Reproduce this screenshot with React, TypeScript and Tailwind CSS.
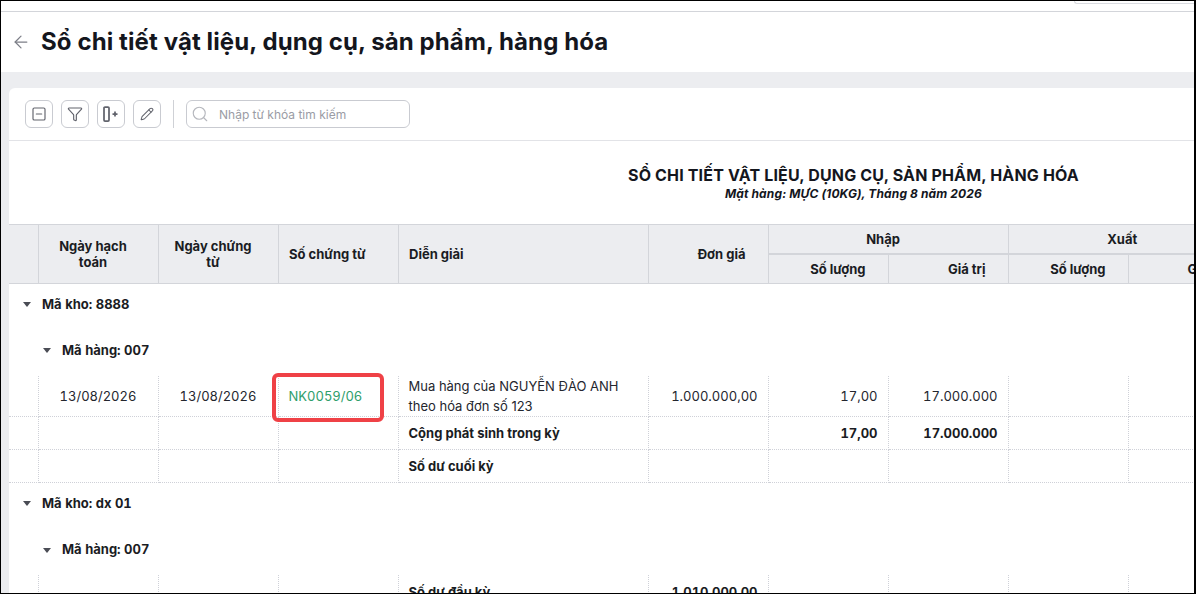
import { ArrowLeft, Filter, Pencil, Search, SquareMinus } from 'lucide-react';

const FONT = "font-['Inter','Noto_Sans',sans-serif]";

const dotted = 'border-r border-b border-dotted border-[#cfd1d8]';
const headCell = 'border-r border-b border-[#d3d5da] bg-[#ecedf0] text-[13px] font-bold text-[#1a1c23]';

const colWidths = [29, 120, 120, 120, 250, 120, 120, 120, 120, 120, 60];

const ToolButton = ({ children }: { children: React.ReactNode }) => (
  <button className="flex h-7 w-7 items-center justify-center rounded-md border border-[#c9cbd1] bg-white text-[#62646d]">
    {children}
  </button>
);

const Caret = () => (
  <span className="inline-block h-0 w-0 border-x-[4px] border-t-[5px] border-x-transparent border-t-[#4a4c55]" />
);

const GroupRow = ({ label, indent, height }: { label: string; indent: boolean; height: string }) => (
  <tr className={height}>
    <td colSpan={11} className="p-0">
      <div className={`flex items-center gap-[11px] text-[13px] font-bold tabular-nums text-[#1a1c23] ${indent ? 'pl-[34px]' : 'pl-[14px]'}`}>
        <Caret />
        <span>{label}</span>
      </div>
    </td>
  </tr>
);

type RowProps = {
  height: string;
  date?: boolean;
  voucher?: React.ReactNode;
  desc?: React.ReactNode;
  price?: string;
  qty?: string;
  value?: string;
  bold?: boolean;
  noBorder?: boolean;
};

const DataRow = ({ height, date, voucher, desc, price, qty, value, bold, noBorder }: RowProps) => {
  const cell = noBorder ? 'border-r border-dotted border-[#cfd1d8]' : dotted;
  const num = `${cell} pr-[10px] pt-[2px] text-right text-[13px] tabular-nums ${bold ? 'font-bold text-[#1a1c23]' : 'text-[#24262e]'}`;
  return (
    <tr className={height}>
      <td className={cell} />
      <td className={`${cell} pt-[2px] text-center text-[13px] tabular-nums text-[#24262e]`}>{date && '13/08/2026'}</td>
      <td className={`${cell} pt-[2px] text-center text-[13px] tabular-nums text-[#24262e]`}>{date && '13/08/2026'}</td>
      <td className={`${cell} relative pl-[10px] pt-[2px] text-[13px] tabular-nums`}>{voucher}</td>
      <td className={`${cell} pl-[10px] text-[13px] leading-[20px] text-[#24262e]`}>{desc}</td>
      <td className={num}>{price}</td>
      <td className={num}>{qty}</td>
      <td className={num}>{value}</td>
      <td className={cell} />
      <td className={cell} />
      <td className={noBorder ? '' : 'border-b border-dotted border-[#cfd1d8]'} />
    </tr>
  );
};

export default function App() {
  return (
    <div className={`${FONT} flex h-[594px] w-[1196px] flex-col overflow-hidden border border-r-2 border-black bg-[#ecedf0]`}>
      {/* thanh trên cùng */}
      <div className="relative h-[11px] shrink-0 border-b border-[#d3d5da] bg-white">
        <div className="absolute right-0 top-0 h-[3px] w-[120px] rounded-bl border-b border-l border-[#d9dbe0]" />
      </div>

      <header className="flex h-[60px] shrink-0 items-center gap-[10px] bg-white pl-[10px]">
        <ArrowLeft size={20} strokeWidth={1.5} className="text-[#7c7e87]" />
        <h1 className="text-[24px] font-bold tracking-[0.1px] text-[#14161d]">Sổ chi tiết vật liệu, dụng cụ, sản phẩm, hàng hóa</h1>
      </header>

      <main className="ml-2 mt-4 flex min-h-0 flex-1 flex-col overflow-hidden rounded-tl-md bg-white">
        <div className="flex h-[53px] shrink-0 items-center gap-2 border-b border-[#e2e3e7] pl-4">
          <ToolButton><SquareMinus size={16} strokeWidth={1.75} /></ToolButton>
          <ToolButton><Filter size={16} strokeWidth={1.75} /></ToolButton>
          <ToolButton>
            <svg width="18" height="16" viewBox="0 0 18 16" fill="none" stroke="currentColor" strokeWidth="1.75">
              <rect x="2" y="1" width="5" height="14" rx="1" />
              <path d="M10.5 8h5M13 5.5v5" />
            </svg>
          </ToolButton>
          <ToolButton><Pencil size={14} strokeWidth={1.75} /></ToolButton>
          <div className="mx-1 h-7 w-px bg-[#cfd1d6]" />
          <div className="flex h-7 w-[224px] items-center gap-[10px] rounded-md border border-[#c9cbd1] pl-[4px] text-[12px] text-[#9a9ca5]">
            <Search size={18} strokeWidth={1.5} className="text-[#b5b7bd]" />
            <span className="pt-px">Nhập từ khóa tìm kiếm</span>
          </div>
        </div>

        <div className="h-[83px] shrink-0 pl-[619px] pt-[23px] text-[#14161d]">
          <div className="text-[16px] font-bold leading-[22px] tracking-[0.16px]">SỔ CHI TIẾT VẬT LIỆU, DỤNG CỤ, SẢN PHẨM, HÀNG HÓA</div>
          <div className="pl-[97px] text-[12px] font-bold italic leading-[15px] tracking-[0.13px]">Mặt hàng: MỰC (10KG), Tháng 8 năm 2026</div>
        </div>

        <table className="w-[1209px] shrink-0 table-fixed border-collapse border-t border-[#d3d5da]">
          <colgroup>
            {colWidths.map((w, i) => (
              <col key={i} style={{ width: w }} />
            ))}
          </colgroup>
          <thead>
            <tr className="h-[29px]">
              <th rowSpan={2} className={headCell} />
              <th rowSpan={2} className={`${headCell} pl-[10px] pr-5 leading-4`}>Ngày hạch toán</th>
              <th rowSpan={2} className={`${headCell} pl-[10px] pr-5 leading-4`}>Ngày chứng từ</th>
              <th rowSpan={2} className={`${headCell} pl-[10.5px] pt-px text-left`}>Số chứng từ</th>
              <th rowSpan={2} className={`${headCell} pl-[10.5px] pt-px text-left`}>Diễn giải</th>
              <th rowSpan={2} className={`${headCell} pr-[22px] pt-px text-right`}>Đơn giá</th>
              <th colSpan={2} className={`${headCell} border-b-2 pr-[10px] pt-px`}>Nhập</th>
              <th colSpan={3} className={`${headCell} border-b-2 border-r-0 pt-px`}>
                <span className="relative -left-[36px]">Xuất</span>
              </th>
            </tr>
            <tr className="h-[30px]">
              <th className={`${headCell} pr-[22px] pt-px text-right`}>Số lượng</th>
              <th className={`${headCell} pr-[22px] pt-px text-right`}>Giá trị</th>
              <th className={`${headCell} pr-[22px] pt-px text-right`}>Số lượng</th>
              <th colSpan={2} className={`${headCell} border-r-0 pl-[59px] pt-px text-left`}>Giá trị</th>
            </tr>
          </thead>
          <tbody>
            <GroupRow label="Mã kho: 8888" indent={false} height="h-[42px]" />
            <GroupRow label="Mã hàng: 007" indent height="h-[50px]" />
            <DataRow
              height="h-[40px]"
              date
              voucher={
                <>
                  <span className="text-[#2e9e6b]">NK0059/06</span>
                  <div className="absolute -left-[7px] -top-[3px] h-[49px] w-[112px] rounded-[6px] border-[4px] border-[#ef4146]" />
                </>
              }
              desc={
                <>
                  Mua hàng của NGUYỄN ĐÀO ANH
                  <br />
                  theo hóa đơn số 123
                </>
              }
              price="1.000.000,00"
              qty="17,00"
              value="17.000.000"
            />
            <DataRow height="h-[33px]" bold desc={<b className="font-bold text-[#1a1c23]">Cộng phát sinh trong kỳ</b>} qty="17,00" value="17.000.000" />
            <DataRow height="h-[33px]" desc={<b className="font-bold text-[#1a1c23]">Số dư cuối kỳ</b>} />
            <GroupRow label="Mã kho: dx 01" indent={false} height="h-[43px]" />
            <GroupRow label="Mã hàng: 007" indent height="h-[50px]" />
            <DataRow
              height="h-[33px]"
              bold
              noBorder
              desc={<b className="font-bold text-[#1a1c23]">Số dư đầu kỳ</b>}
              price="1.010.000,00"
            />
          </tbody>
        </table>
      </main>
    </div>
  );
}
